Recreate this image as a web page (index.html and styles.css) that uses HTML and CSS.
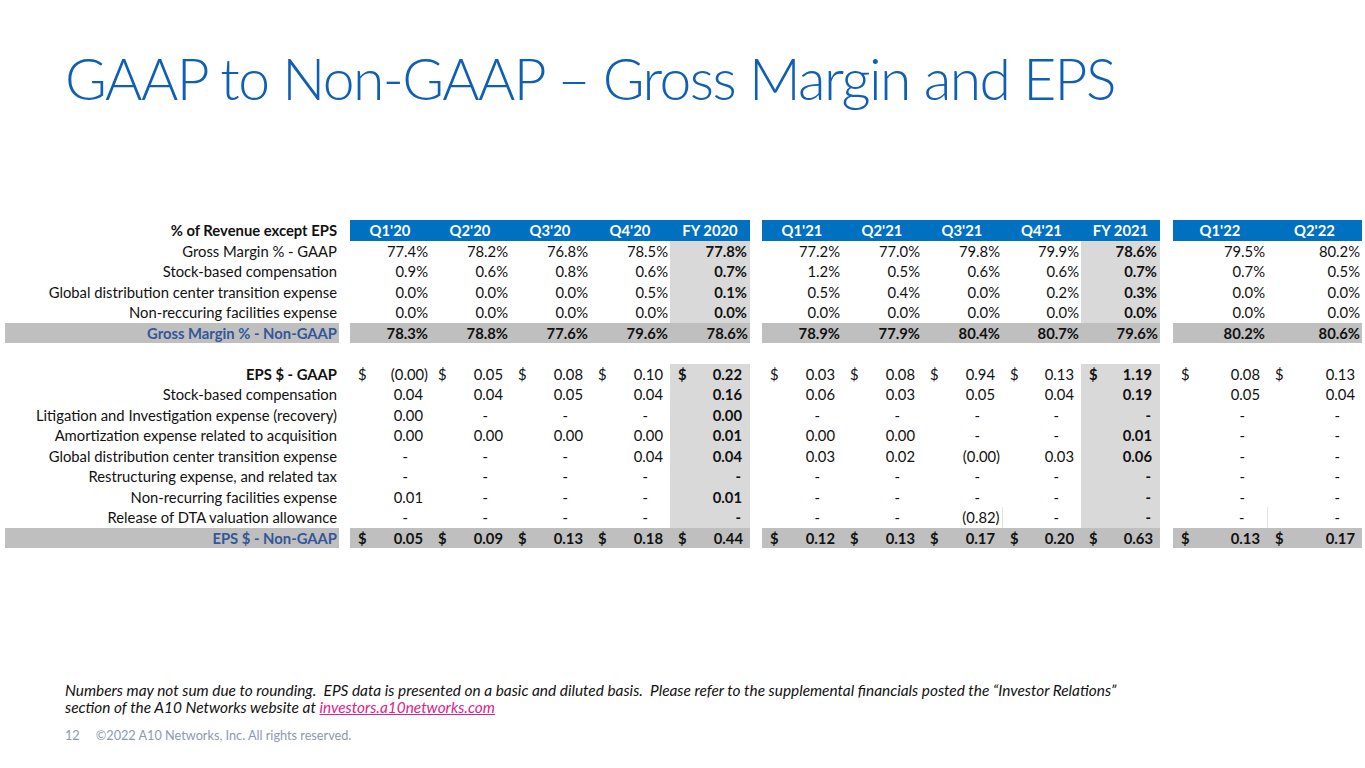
FILE: index.html
```html
<!DOCTYPE html>
<html lang="en">
<head>
<meta charset="utf-8">
<title>GAAP to Non-GAAP – Gross Margin and EPS</title>
<link rel="stylesheet" href="styles.css">
</head>
<body>
<div class="slide">
  <h1 class="title">GAAP to Non-GAAP – Gross Margin and EPS</h1>

  <table class="fin">
    <colgroup>
      <col class="c-lab"><col class="c-sp1">
      <col class="c80"><col class="c80"><col class="c80"><col class="c80"><col class="c80">
      <col class="c-sp2">
      <col class="c80"><col class="c80"><col class="c80"><col class="c79"><col class="c79">
      <col class="c-sp3">
      <col class="c94"><col class="c95">
    </colgroup>
    <tbody>
      <tr class="hd">
        <td class="lab b">% of Revenue except EPS</td><td class="sp"></td>
        <td class="h">Q1'20</td><td class="h">Q2'20</td><td class="h">Q3'20</td><td class="h">Q4'20</td><td class="h">FY 2020</td>
        <td class="sp"></td>
        <td class="h">Q1'21</td><td class="h">Q2'21</td><td class="h">Q3'21</td><td class="h">Q4'21</td><td class="h">FY 2021</td>
        <td class="sp"></td>
        <td class="h">Q1'22</td><td class="h">Q2'22</td>
      </tr>
      <tr>
        <td class="lab">Gross Margin % - GAAP</td><td class="sp"></td>
        <td class="v">77.4%</td><td class="v">78.2%</td><td class="v">76.8%</td><td class="v">78.5%</td><td class="v fy">77.8%</td>
        <td class="sp"></td>
        <td class="v">77.2%</td><td class="v">77.0%</td><td class="v">79.8%</td><td class="v">79.9%</td><td class="v fy">78.6%</td>
        <td class="sp"></td>
        <td class="v">79.5%</td><td class="v">80.2%</td>
      </tr>
      <tr>
        <td class="lab">Stock-based compensation</td><td class="sp"></td>
        <td class="v">0.9%</td><td class="v">0.6%</td><td class="v">0.8%</td><td class="v">0.6%</td><td class="v fy">0.7%</td>
        <td class="sp"></td>
        <td class="v">1.2%</td><td class="v">0.5%</td><td class="v">0.6%</td><td class="v">0.6%</td><td class="v fy">0.7%</td>
        <td class="sp"></td>
        <td class="v">0.7%</td><td class="v">0.5%</td>
      </tr>
      <tr>
        <td class="lab">Global distribution center transition expense</td><td class="sp"></td>
        <td class="v">0.0%</td><td class="v">0.0%</td><td class="v">0.0%</td><td class="v">0.5%</td><td class="v fy">0.1%</td>
        <td class="sp"></td>
        <td class="v">0.5%</td><td class="v">0.4%</td><td class="v">0.0%</td><td class="v">0.2%</td><td class="v fy">0.3%</td>
        <td class="sp"></td>
        <td class="v">0.0%</td><td class="v">0.0%</td>
      </tr>
      <tr>
        <td class="lab">Non-reccuring facilities expense</td><td class="sp"></td>
        <td class="v">0.0%</td><td class="v">0.0%</td><td class="v">0.0%</td><td class="v">0.0%</td><td class="v fy">0.0%</td>
        <td class="sp"></td>
        <td class="v">0.0%</td><td class="v">0.0%</td><td class="v">0.0%</td><td class="v">0.0%</td><td class="v fy">0.0%</td>
        <td class="sp"></td>
        <td class="v">0.0%</td><td class="v">0.0%</td>
      </tr>
      <tr class="tot">
        <td class="lab">Gross Margin % - Non-GAAP</td><td class="sp"></td>
        <td class="v">78.3%</td><td class="v">78.8%</td><td class="v">77.6%</td><td class="v">79.6%</td><td class="v">78.6%</td>
        <td class="sp"></td>
        <td class="v">78.9%</td><td class="v">77.9%</td><td class="v">80.4%</td><td class="v">80.7%</td><td class="v">79.6%</td>
        <td class="sp"></td>
        <td class="v">80.2%</td><td class="v">80.6%</td>
      </tr>
      <tr class="blank">
        <td class="lab"></td><td class="sp"></td>
        <td></td><td></td><td></td><td></td><td></td>
        <td class="sp"></td>
        <td></td><td></td><td></td><td></td><td></td>
        <td class="sp"></td>
        <td></td><td></td>
      </tr>
      <tr>
        <td class="lab b">EPS $ - GAAP</td><td class="sp"></td>
        <td class="v"><span class="cur">$</span>(0.00)</td>
        <td class="v"><span class="cur">$</span><span class="p">0.05</span></td>
        <td class="v"><span class="cur">$</span><span class="p">0.08</span></td>
        <td class="v"><span class="cur">$</span><span class="p">0.10</span></td>
        <td class="v fy"><span class="cur">$</span><span class="p">0.22</span></td>
        <td class="sp"></td>
        <td class="v"><span class="cur">$</span><span class="p">0.03</span></td>
        <td class="v"><span class="cur">$</span><span class="p">0.08</span></td>
        <td class="v"><span class="cur">$</span><span class="p">0.94</span></td>
        <td class="v"><span class="cur">$</span><span class="p">0.13</span></td>
        <td class="v fy"><span class="cur">$</span><span class="p">1.19</span></td>
        <td class="sp"></td>
        <td class="v"><span class="cur">$</span><span class="p">0.08</span></td>
        <td class="v"><span class="cur">$</span><span class="p">0.13</span></td>
      </tr>
      <tr>
        <td class="lab">Stock-based compensation</td><td class="sp"></td>
        <td class="v"><span class="p">0.04</span></td><td class="v"><span class="p">0.04</span></td><td class="v"><span class="p">0.05</span></td><td class="v"><span class="p">0.04</span></td><td class="v fy"><span class="p">0.16</span></td>
        <td class="sp"></td>
        <td class="v"><span class="p">0.06</span></td><td class="v"><span class="p">0.03</span></td><td class="v"><span class="p">0.05</span></td><td class="v"><span class="p">0.04</span></td><td class="v fy"><span class="p">0.19</span></td>
        <td class="sp"></td>
        <td class="v"><span class="p">0.05</span></td><td class="v"><span class="p">0.04</span></td>
      </tr>
      <tr>
        <td class="lab">Litigation and Investigation expense (recovery)</td><td class="sp"></td>
        <td class="v"><span class="p">0.00</span></td><td class="v"><span class="d">-</span></td><td class="v"><span class="d">-</span></td><td class="v"><span class="d">-</span></td><td class="v fy"><span class="p">0.00</span></td>
        <td class="sp"></td>
        <td class="v"><span class="d">-</span></td><td class="v"><span class="d">-</span></td><td class="v"><span class="d">-</span></td><td class="v"><span class="d">-</span></td><td class="v fy"><span class="d">-</span></td>
        <td class="sp"></td>
        <td class="v"><span class="d">-</span></td><td class="v"><span class="d">-</span></td>
      </tr>
      <tr>
        <td class="lab">Amortization expense related to acquisition</td><td class="sp"></td>
        <td class="v"><span class="p">0.00</span></td><td class="v"><span class="p">0.00</span></td><td class="v"><span class="p">0.00</span></td><td class="v"><span class="p">0.00</span></td><td class="v fy"><span class="p">0.01</span></td>
        <td class="sp"></td>
        <td class="v"><span class="p">0.00</span></td><td class="v"><span class="p">0.00</span></td><td class="v"><span class="d">-</span></td><td class="v"><span class="d">-</span></td><td class="v fy"><span class="p">0.01</span></td>
        <td class="sp"></td>
        <td class="v"><span class="d">-</span></td><td class="v"><span class="d">-</span></td>
      </tr>
      <tr>
        <td class="lab">Global distribution center transition expense</td><td class="sp"></td>
        <td class="v"><span class="d">-</span></td><td class="v"><span class="d">-</span></td><td class="v"><span class="d">-</span></td><td class="v"><span class="p">0.04</span></td><td class="v fy"><span class="p">0.04</span></td>
        <td class="sp"></td>
        <td class="v"><span class="p">0.03</span></td><td class="v"><span class="p">0.02</span></td><td class="v">(0.00)</td><td class="v"><span class="p">0.03</span></td><td class="v fy"><span class="p">0.06</span></td>
        <td class="sp"></td>
        <td class="v"><span class="d">-</span></td><td class="v"><span class="d">-</span></td>
      </tr>
      <tr>
        <td class="lab">Restructuring expense, and related tax</td><td class="sp"></td>
        <td class="v"><span class="d">-</span></td><td class="v"><span class="d">-</span></td><td class="v"><span class="d">-</span></td><td class="v"><span class="d">-</span></td><td class="v fy"><span class="d">-</span></td>
        <td class="sp"></td>
        <td class="v"><span class="d">-</span></td><td class="v"><span class="d">-</span></td><td class="v"><span class="d">-</span></td><td class="v"><span class="d">-</span></td><td class="v fy"><span class="d">-</span></td>
        <td class="sp"></td>
        <td class="v"><span class="d">-</span></td><td class="v"><span class="d">-</span></td>
      </tr>
      <tr>
        <td class="lab">Non-recurring facilities expense</td><td class="sp"></td>
        <td class="v"><span class="p">0.01</span></td><td class="v"><span class="d">-</span></td><td class="v"><span class="d">-</span></td><td class="v"><span class="d">-</span></td><td class="v fy"><span class="p">0.01</span></td>
        <td class="sp"></td>
        <td class="v"><span class="d">-</span></td><td class="v"><span class="d">-</span></td><td class="v"><span class="d">-</span></td><td class="v"><span class="d">-</span></td><td class="v fy"><span class="d">-</span></td>
        <td class="sp"></td>
        <td class="v"><span class="d">-</span></td><td class="v"><span class="d">-</span></td>
      </tr>
      <tr>
        <td class="lab">Release of DTA valuation allowance</td><td class="sp"></td>
        <td class="v"><span class="d">-</span></td><td class="v"><span class="d">-</span></td><td class="v"><span class="d">-</span></td><td class="v"><span class="d">-</span></td><td class="v fy"><span class="d">-</span></td>
        <td class="sp"></td>
        <td class="v"><span class="d">-</span></td><td class="v"><span class="d">-</span></td><td class="v rule">(0.82)</td><td class="v"><span class="d">-</span></td><td class="v fy"><span class="d">-</span></td>
        <td class="sp"></td>
        <td class="v rule"><span class="d">-</span></td><td class="v"><span class="d">-</span></td>
      </tr>
      <tr class="tot">
        <td class="lab">EPS $ - Non-GAAP</td><td class="sp"></td>
        <td class="v"><span class="cur">$</span><span class="p">0.05</span></td>
        <td class="v"><span class="cur">$</span><span class="p">0.09</span></td>
        <td class="v"><span class="cur">$</span><span class="p">0.13</span></td>
        <td class="v"><span class="cur">$</span><span class="p">0.18</span></td>
        <td class="v"><span class="cur">$</span><span class="p">0.44</span></td>
        <td class="sp"></td>
        <td class="v"><span class="cur">$</span><span class="p">0.12</span></td>
        <td class="v"><span class="cur">$</span><span class="p">0.13</span></td>
        <td class="v"><span class="cur">$</span><span class="p">0.17</span></td>
        <td class="v"><span class="cur">$</span><span class="p">0.20</span></td>
        <td class="v"><span class="cur">$</span><span class="p">0.63</span></td>
        <td class="sp"></td>
        <td class="v"><span class="cur">$</span><span class="p">0.13</span></td>
        <td class="v"><span class="cur">$</span><span class="p">0.17</span></td>
      </tr>
    </tbody>
  </table>

  <p class="note">Numbers may not sum due to rounding.&nbsp; EPS data is presented on a basic and diluted basis.&nbsp; Please refer to the supplemental financials posted the “Investor Relations”<br>section of the A10 Networks website at <a class="link" href="#">investors.a10networks.com</a></p>

  <div class="foot">
    <span class="pg">12</span>
    <span class="copy">©2022 A10 Networks, Inc. All rights reserved.</span>
  </div>
</div>
</body>
</html>
```
FILE: styles.css
```css
html, body {
  margin: 0;
  padding: 0;
  background: #ffffff;
}

body {
  font-family: Lato, "Open Sans", "DejaVu Sans", sans-serif;
  color: #111111;
}

.slide {
  width: 1365px;
  height: 768px;
  overflow: hidden;
}

.title {
  margin: 0;
  padding: 43px 0 0 65px;
  height: 71px;
  font-size: 57px;
  line-height: 71px;
  letter-spacing: -1.6px;
  font-weight: 300;
  color: #0f5fb6;
  white-space: nowrap;
}

/* ---------- table ---------- */
.fin {
  margin: 106px 0 0 5px;
  border-collapse: collapse;
  table-layout: fixed;
  width: 1357px;
  font-size: 14.8px;
}

.c-lab { width: 334px; }
.c-sp1 { width: 11px; }
.c-sp2 { width: 12px; }
.c-sp3 { width: 13px; }
.c80 { width: 80px; }
.c79 { width: 79px; }
.c94 { width: 94px; }
.c95 { width: 95px; }

.fin td {
  height: 20.5px;
  padding: 0 2px;
  line-height: 20px;
  white-space: nowrap;
  overflow: hidden;
  box-sizing: border-box;
}

.fin .lab {
  text-align: right;
  padding-right: 2px;
}

.fin .b {
  font-weight: 700;
}

.fin .sp {
  padding: 0;
  background: #ffffff;
}

.fin .h {
  background: #0070c0;
  color: #ffffff;
  font-weight: 700;
  text-align: center;
}

.fin .v {
  text-align: right;
  padding-right: 2px;
}

.fin .fy {
  background: #d9d9d9;
  font-weight: 700;
  padding-right: 3px;
}

.fin .cur {
  float: left;
  padding-left: 6px;
}

.fin .p {
  padding-right: 5px;
}

.fin .d {
  padding-right: 20px;
}

.fin .fy .d {
  padding-right: 6px;
}

.fin .rule {
  border-right: 1px solid #e2e2e2;
}

.fin .tot td {
  background: #bfbfbf;
  font-weight: 700;
}

.fin .tot td.sp {
  background: #ffffff;
}

.fin .tot .lab {
  color: #33579a;
}

/* ---------- notes ---------- */
.note {
  margin: 134px 0 0 65px;
  font-size: 15.4px;
  line-height: 17px;
  font-style: italic;
  color: #111111;
  white-space: nowrap;
}

.link {
  color: #e0218a;
  text-decoration: underline;
}

.foot {
  margin: 12px 0 0 65px;
  display: flex;
  gap: 16px;
  font-size: 12.7px;
  line-height: 14px;
  color: #8b9ab0;
}
```
